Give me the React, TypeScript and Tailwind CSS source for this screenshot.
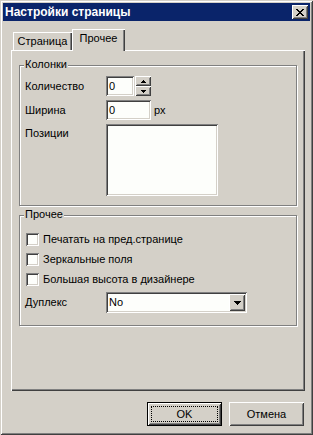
import React from "react";

const sunken =
  "shadow-[inset_1px_1px_0_#808080,inset_-1px_-1px_0_#ffffff,inset_2px_2px_0_#404040,inset_-2px_-2px_0_#d4d0c8]";
const raised =
  "shadow-[inset_1px_1px_0_#ffffff,inset_-1px_-1px_0_#404040,inset_2px_2px_0_#d4d0c8,inset_-2px_-2px_0_#808080]";

function Checkbox({ label }: { label: string }) {
  return (
    <div className="flex items-center h-[13px] ml-[1px]">
      <div className={`w-[13px] h-[13px] bg-[#fdfefb] ${sunken}`} />
      <span className="ml-[4px] leading-[13px]">{label}</span>
    </div>
  );
}

function Fieldset({
  title,
  height,
  className,
  children,
}: {
  title: string;
  height: string;
  className?: string;
  children: React.ReactNode;
}) {
  return (
    <div
      className={`relative border border-[#808080] shadow-[1px_1px_0_#ffffff,inset_1px_1px_0_#ffffff] ${height} ${className ?? ""}`}
    >
      <span className="absolute left-[4px] -top-[8px] px-[1px] bg-[#d4d0c8] leading-[13px]">
        {title}
      </span>
      {children}
    </div>
  );
}

export default function App() {
  return (
    <div
      className="w-[313px] h-[435px] bg-[#d4d0c8] p-[3px] text-[11px] text-black shadow-[inset_1px_1px_0_#d4d0c8,inset_-1px_-1px_0_#404040,inset_2px_2px_0_#ffffff,inset_-2px_-2px_0_#808080] flex flex-col"
      style={{ fontFamily: '"Liberation Sans", Arial, sans-serif' }}
    >
      {/* Title bar */}
      <div className="h-[18px] bg-[#0a246a] flex items-center pl-[2px] pr-[2px]">
        <span className="text-white font-bold text-[12px] leading-[14px] flex-1">
          Настройки страницы
        </span>
        <div
          className={`w-[16px] h-[14px] bg-[#d4d0c8] flex items-center justify-center ${raised}`}
        >
          <svg width="8" height="7" viewBox="0 0 8 7" shapeRendering="crispEdges">
            <path d="M0 0h2v1h1v1h2v-1h1v-1h2v1h-1v1h-1v1h-1v1h1v1h1v1h1v1h-2v-1h-1v-1h-2v1h-1v1h-2v-1h1v-1h1v-1h1v-1h-1v-1h-1v-1h-1z" fill="#000" />
          </svg>
        </div>
      </div>

      {/* Body */}
      <div className="flex flex-col pl-[8px] pr-[5px] pt-[8px]">
        {/* Tabs */}
        <div className="flex items-end h-[21px] relative z-10">
          <div className="ml-[2px] h-[18px] w-[59px] flex items-center justify-center shadow-[inset_1px_1px_0_#ffffff,inset_-1px_0_0_#404040,inset_-2px_0_0_#808080]">
            <span className="leading-[13px] mt-[1px]">Страница</span>
          </div>
          <div className="h-[22px] w-[53px] -mb-[1px] bg-[#d4d0c8] flex items-start justify-center pt-[3px] shadow-[inset_1px_1px_0_#ffffff,inset_-1px_0_0_#404040,inset_-2px_0_0_#808080]">
            <span className="leading-[13px]">Прочее</span>
          </div>
        </div>

        {/* Panel */}
        <div className="h-[341px] px-[8px] pt-[15px] shadow-[inset_1px_1px_0_#ffffff,inset_-1px_-1px_0_#404040,inset_-2px_-2px_0_#808080] flex flex-col">
          <Fieldset title="Колонки" height="h-[141px]">
            <div className="flex flex-col pl-[5px] pt-[10px] gap-[4px]">
              <div className="flex items-center h-[20px]">
                <span className="w-[81px] leading-[13px]">Количество</span>
                <div className={`w-[28px] h-[20px] bg-[#fdfefb] ${sunken} flex items-center pl-[3px]`}>
                  <span className="leading-[13px]">0</span>
                </div>
                <div className="ml-[1px] flex flex-col w-[16px] h-[20px]">
                  <div className={`h-[10px] bg-[#d4d0c8] ${raised} flex items-center justify-center`}>
                    <svg width="5" height="3" viewBox="0 0 5 3" shapeRendering="crispEdges">
                      <path d="M2 0h1v1h1v1h1v1h-5v-1h1v-1h1z" fill="#000" />
                    </svg>
                  </div>
                  <div className={`h-[10px] bg-[#d4d0c8] ${raised} flex items-center justify-center`}>
                    <svg width="5" height="3" viewBox="0 0 5 3" shapeRendering="crispEdges">
                      <path d="M0 0h5v1h-1v1h-1v1h-1v-1h-1v-1h-1z" fill="#000" />
                    </svg>
                  </div>
                </div>
              </div>
              <div className="flex items-center h-[20px]">
                <span className="w-[81px] leading-[13px]">Ширина</span>
                <div className={`w-[45px] h-[20px] bg-[#fdfefb] ${sunken} flex items-center pl-[3px]`}>
                  <span className="leading-[13px]">0</span>
                </div>
                <span className="ml-[3px] leading-[13px]">px</span>
              </div>
              <div className="flex items-start h-[72px]">
                <span className="w-[81px] leading-[13px] mt-[3px]">Позиции</span>
                <div className={`w-[112px] h-[72px] bg-[#fdfefb] ${sunken}`} />
              </div>
            </div>
          </Fieldset>

          <Fieldset title="Прочее" height="h-[111px]" className="mt-[9px]">
            <div className="flex flex-col pl-[5px] pt-[17px] gap-[7px]">
              <Checkbox label="Печатать на пред.странице" />
              <Checkbox label="Зеркальные поля" />
              <Checkbox label="Большая высота в дизайнере" />
              <div className="flex items-center h-[21px] -mt-[1px]">
                <span className="w-[81px] leading-[13px]">Дуплекс</span>
                <div className={`w-[141px] h-[21px] bg-[#fdfefb] ${sunken} flex items-center pl-[3px] pr-[2px]`}>
                  <span className="leading-[13px] flex-1">No</span>
                  <div className={`w-[16px] h-[17px] bg-[#d4d0c8] ${raised} flex items-center justify-center`}>
                    <svg width="7" height="4" viewBox="0 0 7 4" shapeRendering="crispEdges">
                      <path d="M0 0h7v1h-1v1h-1v1h-1v1h-1v-1h-1v-1h-1v-1h-1z" fill="#000" />
                    </svg>
                  </div>
                </div>
              </div>
            </div>
          </Fieldset>
        </div>

        {/* Buttons */}
        <div className="flex justify-end gap-[7px] mt-[11px] pr-[1px]">
          <div className="w-[75px] h-[24px] border border-black bg-[#d4d0c8] relative">
            <div className={`absolute inset-0 ${raised} flex items-center justify-center`}>
              <div className="absolute inset-[3px] border border-dotted border-black" />
              <span className="leading-[13px]">OK</span>
            </div>
          </div>
          <div className={`w-[75px] h-[24px] bg-[#d4d0c8] ${raised} flex items-center justify-center`}>
            <span className="leading-[13px]">Отмена</span>
          </div>
        </div>
      </div>
    </div>
  );
}
